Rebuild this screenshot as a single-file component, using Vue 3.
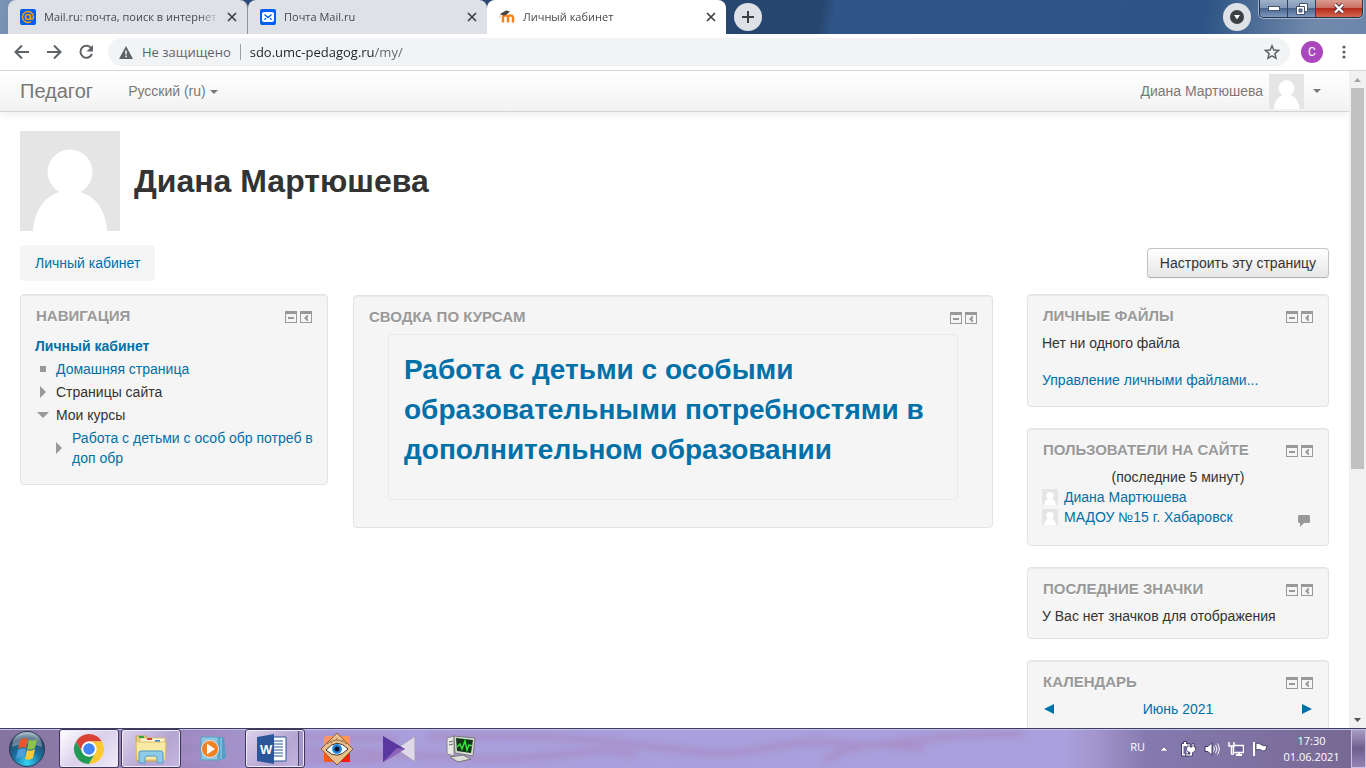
<script setup>
import { ref } from 'vue'

const address = ref('sdo.umc-pedagog.ru/my/')

const tabs = [
  { id: 'mail', title: 'Mail.ru: почта, поиск в интернет' },
  { id: 'post', title: 'Почта Mail.ru' },
  { id: 'moodle', title: 'Личный кабинет' }
]
const activeTab = ref('moodle')

const onlineUsers = [
  { name: 'Диана Мартюшева', message: false },
  { name: 'МАДОУ №15 г. Хабаровск', message: true }
]

const sideBlocks = [
  { id: 'files', title: 'Личные файлы' },
  { id: 'online', title: 'Пользователи на сайте' },
  { id: 'badges', title: 'Последние значки' },
  { id: 'calendar', title: 'Календарь' }
]

const tasks = [
  { id: 'chrome', label: 'Google Chrome', state: 'active' },
  { id: 'explorer', label: 'Проводник', state: 'open' },
  { id: 'player', label: 'Проигрыватель', state: '' },
  { id: 'word', label: 'Word', state: 'open stacked' },
  { id: 'viewer', label: 'Просмотр изображений', state: '' },
  { id: 'kmp', label: 'KMPlayer', state: '' },
  { id: 'monitor', label: 'Монитор', state: '' }
]
</script>

<template>
  <div class="screen">
    <header class="tabstrip">
      <div class="tabs">
        <div
          v-for="tab in tabs"
          :key="tab.id"
          class="tab"
          :class="{ active: tab.id === activeTab }"
          @click="activeTab = tab.id"
        >
          <svg v-if="tab.id === 'mail'" class="favicon" viewBox="0 0 16 16">
            <rect width="16" height="16" rx="2" fill="#005ff9" />
            <circle cx="8" cy="8" r="2.5" fill="none" stroke="#ff9e00" stroke-width="1.5" />
            <path d="M10.5 5.5v3.2c0 2.4 3 2 3-.7A5.5 5.5 0 1 0 11 12.6" fill="none" stroke="#ff9e00" stroke-width="1.4" />
          </svg>
          <svg v-else-if="tab.id === 'post'" class="favicon" viewBox="0 0 16 16">
            <rect width="16" height="16" rx="2" fill="#005ff9" />
            <rect x="2" y="3" width="12" height="10" rx="2" fill="#fff" />
            <path d="M4.5 5.5L8 8.5l3.500-3M4.500 10.800L6 9.300M11.500 10.800L10 9.300" fill="none" stroke="#005ff9" stroke-width="1.4" />
          </svg>
          <svg v-else class="favicon" viewBox="0 0 16 16">
            <path d="M4 13.500V9c0-3.500 5-3.500 5 0v4.500M9 13.500V9c0-3.500 5-3.500 5 0v4.500" fill="none" stroke="#f98012" stroke-width="2.400" />
            <path d="M1 5l6-3.500 4 1-4 3.500-3 .5z" fill="#444" />
            <path d="M1.500 5L.8 9" stroke="#e9b98a" fill="none" />
          </svg>
          <span class="tab-title">{{ tab.title }}</span>
          <button class="tab-close" aria-label="Закрыть вкладку">
            <svg width="10" height="10" viewBox="0 0 10 10">
              <path d="M1 1l8 8M9 1L1 9" stroke="#3c4043" stroke-width="1.700" />
            </svg>
          </button>
        </div>
      </div>
      <button class="round-btn" aria-label="Новая вкладка">
        <svg width="12" height="12" viewBox="0 0 12 12">
          <path d="M6 0v12M0 6h12" stroke="#3c4043" stroke-width="2" />
        </svg>
      </button>
      <span class="glass"></span>
      <button class="round-btn search-tabs" aria-label="Поиск вкладок">
        <svg width="14" height="14" viewBox="0 0 14 14">
          <circle cx="7" cy="7" r="7" fill="#3c4043" />
          <path d="M4 5h6L7 9.500z" fill="#fff" />
        </svg>
      </button>
      <div class="win-controls">
        <button aria-label="Свернуть">
          <svg width="12" height="5" viewBox="0 0 12 5"><rect x=".5" y=".5" width="11" height="4" fill="#fff" stroke="#45536b" /></svg>
        </button>
        <button aria-label="Развернуть">
          <svg width="12" height="12" viewBox="0 0 12 12">
            <path d="M3.500.5h8v8h-8z" fill="#fff" stroke="#45536b" />
            <path d="M.5 3.500h8v8h-8z" fill="#fff" stroke="#45536b" />
            <path d="M3 6h3v3H3z" fill="#6e84a5" stroke="#45536b" />
          </svg>
        </button>
        <button class="win-close" aria-label="Закрыть">
          <svg width="12" height="11" viewBox="0 0 12 11">
            <path d="M2 1.500l8 8M10 1.500l-8 8" stroke="#54323a" stroke-width="4" />
            <path d="M2 1.500l8 8M10 1.500l-8 8" stroke="#fff" stroke-width="2.400" />
          </svg>
        </button>
      </div>
    </header>

    <div class="toolbar">
      <button class="tool" aria-label="Назад">
        <svg width="16" height="16" viewBox="0 0 16 16"><path d="M15 8H2M8 1.500L1.500 8 8 14.500" fill="none" stroke="#5f6368" stroke-width="2" /></svg>
      </button>
      <button class="tool" aria-label="Вперёд">
        <svg width="16" height="16" viewBox="0 0 16 16"><path d="M1 8h13M8 1.500L14.500 8 8 14.500" fill="none" stroke="#5f6368" stroke-width="2" /></svg>
      </button>
      <button class="tool" aria-label="Обновить">
        <svg width="16" height="16" viewBox="0 0 16 16">
          <path d="M13.500 4.500A6 6 0 1 0 14 10" fill="none" stroke="#5f6368" stroke-width="2" />
          <path d="M15 1v6.500H8.500z" fill="#5f6368" />
        </svg>
      </button>
      <div class="omnibox">
        <svg width="14" height="13" viewBox="0 0 14 13">
          <path d="M7 0l7 13H0z" fill="#5f6368" />
          <path d="M7 4.500v4M7 9.500v1.700" stroke="#f1f3f4" stroke-width="1.600" />
        </svg>
        <label class="insecure" for="address">Не защищено</label>
        <input id="address" v-model="address" class="address" type="text" />
        <button class="star" aria-label="Добавить в закладки">
          <svg width="16" height="16" viewBox="0 0 16 16">
            <path d="M8 1.800l1.800 4.300 4.700.4-3.600 3.100 1.100 4.600L8 11.800l-4 2.400 1.100-4.600L1.500 6.500l4.700-.4z" fill="none" stroke="#5f6368" stroke-width="1.500" />
          </svg>
        </button>
      </div>
      <button class="profile">C</button>
      <button class="kebab" aria-label="Меню">
        <svg width="4" height="14" viewBox="0 0 4 14" fill="#5f6368">
          <circle cx="2" cy="2" r="1.600" /><circle cx="2" cy="7" r="1.600" /><circle cx="2" cy="12" r="1.600" />
        </svg>
      </button>
    </div>

    <div class="viewport">
      <div class="page">
        <nav class="navbar">
          <a class="brand" href="#">Педагог</a>
          <a class="lang" href="#">Русский (ru) <i class="caret"></i></a>
          <a class="user-menu" href="#">
            <span>Диана Мартюшева</span>
            <svg width="35" height="35" viewBox="0 0 100 100">
              <rect width="100" height="100" fill="#e5e5e5" />
              <circle cx="50" cy="41" r="23" fill="#fff" />
              <path d="M13 100c2-22 14-36 27-40h20c14 4 26 18 27 40z" fill="#fff" />
            </svg>
            <i class="caret"></i>
          </a>
        </nav>

        <div class="content">
          <div class="page-header">
            <svg width="100" height="100" viewBox="0 0 100 100">
              <rect width="100" height="100" fill="#e5e5e5" />
              <circle cx="50" cy="41" r="22.500" fill="#fff" />
              <path d="M13 100c1-21 13-36 27-39h20c14 3 26 18 27 39z" fill="#fff" />
            </svg>
            <h1>Диана Мартюшева</h1>
          </div>

          <div class="page-bar">
            <div class="breadcrumb"><a href="#">Личный кабинет</a></div>
            <button class="customise">Настроить эту страницу</button>
          </div>

          <div class="columns">
            <section class="block nav-block">
              <div class="block-head">
                <h2>Навигация</h2>
                <span class="block-actions">
                  <button aria-label="Скрыть блок"><svg width="12" height="12" viewBox="0 0 12 12"><path d="M0 0h12v12H0zM1 3v8h10V3zM3 6h6v2H3z" fill="#999" fill-rule="evenodd" /></svg></button>
                  <button aria-label="Закрепить блок"><svg width="12" height="12" viewBox="0 0 12 12"><path d="M0 0h12v12H0zM1 3v8h10V3zM7 4h1v2L7 7l1 1v2H7L4 7z" fill="#999" fill-rule="evenodd" /></svg></button>
                </span>
              </div>
              <ul class="tree">
                <li><a class="current" href="#">Личный кабинет</a></li>
                <li class="node"><i class="mark square"></i><a href="#">Домашняя страница</a></li>
                <li class="node"><i class="mark right"></i><span>Страницы сайта</span></li>
                <li class="node"><i class="mark down"></i><span>Мои курсы</span></li>
                <li class="node child"><i class="mark right"></i><a href="#">Работа с детьми с особ обр потреб в доп обр</a></li>
              </ul>
            </section>

            <section class="block main-block">
              <div class="block-head">
                <h2>Сводка по курсам</h2>
                <span class="block-actions">
                  <button aria-label="Скрыть блок"><svg width="12" height="12" viewBox="0 0 12 12"><path d="M0 0h12v12H0zM1 3v8h10V3zM3 6h6v2H3z" fill="#999" fill-rule="evenodd" /></svg></button>
                  <button aria-label="Закрепить блок"><svg width="12" height="12" viewBox="0 0 12 12"><path d="M0 0h12v12H0zM1 3v8h10V3zM7 4h1v2L7 7l1 1v2H7L4 7z" fill="#999" fill-rule="evenodd" /></svg></button>
                </span>
              </div>
              <div class="course">
                <h3><a href="#">Работа с детьми с особыми образовательными потребностями в дополнительном образовании</a></h3>
              </div>
            </section>

            <aside>
              <section v-for="block in sideBlocks" :key="block.id" class="block" :class="block.id">
                <div class="block-head">
                  <h2>{{ block.title }}</h2>
                  <span class="block-actions">
                    <button aria-label="Скрыть блок"><svg width="12" height="12" viewBox="0 0 12 12"><path d="M0 0h12v12H0zM1 3v8h10V3zM3 6h6v2H3z" fill="#999" fill-rule="evenodd" /></svg></button>
                    <button aria-label="Закрепить блок"><svg width="12" height="12" viewBox="0 0 12 12"><path d="M0 0h12v12H0zM1 3v8h10V3zM7 4h1v2L7 7l1 1v2H7L4 7z" fill="#999" fill-rule="evenodd" /></svg></button>
                  </span>
                </div>
                <div v-if="block.id === 'files'" class="files-body">
                  <p>Нет ни одного файла</p>
                  <a href="#">Управление личными файлами...</a>
                </div>
                <div v-else-if="block.id === 'online'" class="online-body">
                  <p class="centered">(последние 5 минут)</p>
                  <div v-for="user in onlineUsers" :key="user.name" class="online-user">
                    <svg width="16" height="16" viewBox="0 0 100 100">
                      <rect width="100" height="100" fill="#e5e5e5" />
                      <circle cx="50" cy="41" r="23" fill="#fff" />
                      <path d="M13 100c2-22 14-36 27-40h20c14 4 26 18 27 40z" fill="#fff" />
                    </svg>
                    <a href="#">{{ user.name }}</a>
                    <a v-if="user.message" class="message" href="#" aria-label="Сообщение">
                      <svg width="12" height="12" viewBox="0 0 12 12"><path d="M1 0h10l1 1v6l-1 1H6l-4 4V8H1L0 7V1z" fill="#999" /></svg>
                    </a>
                  </div>
                </div>
                <p v-else-if="block.id === 'badges'">У Вас нет значков для отображения</p>
                <div v-else class="month">
                  <a href="#" aria-label="Предыдущий месяц"><svg width="10" height="10" viewBox="0 0 10 10"><path d="M10 0v10L0 5z" fill="#0070a8" /></svg></a>
                  <a href="#">Июнь 2021</a>
                  <a href="#" aria-label="Следующий месяц"><svg width="10" height="10" viewBox="0 0 10 10"><path d="M0 0v10l10-5z" fill="#0070a8" /></svg></a>
                </div>
              </section>
            </aside>
          </div>
        </div>
      </div>
      <div class="scrollbar">
        <button aria-label="Вверх"><svg width="7" height="4" viewBox="0 0 7 4"><path d="M0 4l3.500-4L7 4z" fill="#a3a3a3" /></svg></button>
        <div class="thumb"></div>
        <button class="scroll-down" aria-label="Вниз"><svg width="7" height="4" viewBox="0 0 7 4"><path d="M0 0h7L3.500 4z" fill="#505050" /></svg></button>
      </div>
    </div>

    <footer class="taskbar">
      <svg class="wood" viewBox="0 0 1100 39" preserveAspectRatio="none" fill="none" stroke="#a88fc8" stroke-width="6">
        <path d="M430 9c80-4 150-2 230 9s80 6 130-2 60 4 100-1 90-12 140-10" />
        <path d="M300 22c80-2 170 12 240 6s60-10 100-2" />
        <path d="M830 32c30-20 60-18 100-12" />
        <path d="M120 8c90 8 180-4 280 2M130 32c60-10 160 4 260-2" />
      </svg>
      <button class="start" aria-label="Пуск">
        <svg width="38" height="38" viewBox="0 0 38 38">
          <defs>
            <radialGradient id="orb" cx=".5" cy=".9" r=".9">
              <stop offset="0" stop-color="#35d6f5" />
              <stop offset=".45" stop-color="#19709f" />
              <stop offset=".8" stop-color="#244867" />
              <stop offset="1" stop-color="#9db6c6" />
            </radialGradient>
          </defs>
          <circle cx="19" cy="19" r="17.500" fill="url(#orb)" stroke="#26384f" />
          <path d="M4 17A15 15 0 0 1 34 17Q19 10 4 17z" fill="#fff" opacity=".3" />
          <path d="M12 10q4-3 8-1l-2 9q-4-2-8 1z" fill="#e8582a" />
          <path d="M21 10q4 2 8-1l-2 9q-4 3-8 1z" fill="#8cc443" />
          <path d="M10 20q4-3 8-1l-2 9q-4-2-8 1z" fill="#4d9fdc" />
          <path d="M19 20q4 2 8-1l-2 9q-4 3-8 1z" fill="#fcca38" />
        </svg>
      </button>
      <button v-for="task in tasks" :key="task.id" class="task" :class="task.state" :aria-label="task.label">
        <svg v-if="task.id === 'chrome'" width="32" height="32" viewBox="0 0 32 32">
          <circle cx="16" cy="16" r="15" fill="#fff" />
          <path d="M3 8.500A15 15 0 0 1 29 8.500H16A7.500 7.500 0 0 0 9.500 19.700z" fill="#d94235" />
          <path d="M3 8.500l6.500 11.200A7.500 7.500 0 0 0 22.500 19.700L16 31A15 15 0 0 1 3 8.500z" fill="#229a55" />
          <path d="M16 8.500h13A15 15 0 0 1 16 31l6.500-11.300A7.500 7.500 0 0 0 16 8.500z" fill="#fbc831" />
          <circle cx="16" cy="16" r="7.500" fill="#fff" />
          <circle cx="16" cy="16" r="5.800" fill="#4285f4" />
        </svg>
        <svg v-else-if="task.id === 'explorer'" width="34" height="32" viewBox="0 0 34 32">
          <path d="M2 3h10l2 3h14v22H3z" fill="#e9cf7d" stroke="#c7a24a" />
          <path d="M6 5h25v20H6z" fill="#fff6cf" stroke="#d8bd70" />
          <path d="M5 3h5v2H5z" fill="#2ea34a" /><path d="M13 5h5v2h-5z" fill="#d9402f" /><path d="M21 7h5v2h-5z" fill="#3b8ad8" />
          <path d="M2 9h30l-1 18H3z" fill="#f8e9a5" stroke="#dcc06d" />
          <path d="M5 30V20q0-2 2-2h20q2 0 2 2v10h-6v-5q0-2-2-2h-8q-2 0-2 2v5z" fill="#8ecbe8" stroke="#5199c4" />
        </svg>
        <svg v-else-if="task.id === 'player'" width="30" height="30" viewBox="0 0 30 30">
          <path d="M17 3h9l2 21-9 3z" fill="#4f9fc9" /><path d="M20 4v22M23 4v21" stroke="#a8d9ec" />
          <rect x="3" y="3" width="17" height="23" fill="#8dc7e2" stroke="#5a9fbf" />
          <circle cx="12" cy="15" r="8.500" fill="#f28021" stroke="#e6e3ea" />
          <path d="M9 9.500v11l8-5.500z" fill="#fff" />
        </svg>
        <svg v-else-if="task.id === 'word'" width="32" height="32" viewBox="0 0 32 32">
          <path d="M17 4h13v24H17z" fill="#fff" stroke="#2b579a" />
          <path d="M18 8h9M18 11h9M18 14h9M18 17h9M18 20h9M18 23h9" stroke="#2b579a" />
          <path d="M1 4l17-3v30L1 28z" fill="#2b579a" />
          <text x="4" y="21" class="word-letter">W</text>
        </svg>
        <svg v-else-if="task.id === 'viewer'" width="34" height="34" viewBox="0 0 34 34">
          <rect x="4" y="4" width="26" height="26" rx="2" fill="#ff9463" />
          <path d="M17 17h13v13H17z" fill="#f91b12" /><path d="M4 17h13v13H4z" fill="#fa5a1c" />
          <path d="M17 1l16 16-16 16L1 17z" fill="#e8be8c" stroke="#8b5a38" />
          <path d="M6 18q11-13 22-1-11 12-22 1z" fill="#fff" stroke="#3d2e2a" />
          <circle cx="17" cy="17" r="5" fill="#2389de" /><circle cx="17" cy="17" r="2.500" fill="#07122c" />
          <path d="M7 12q10-8 20 0M10 9l2 2M17 6v3M23 8l-1 2" fill="none" stroke="#9c7048" />
        </svg>
        <svg v-else-if="task.id === 'kmp'" width="34" height="30" viewBox="0 0 34 30">
          <path d="M33 2v26L14 15z" fill="#ded9e8" stroke="#a59cb8" />
          <path d="M1 2l22 13L1 28z" fill="#5a36a0" /><path d="M1 28l22-13-8-1z" fill="#8d65ba" />
        </svg>
        <svg v-else width="32" height="30" viewBox="0 0 32 30">
          <path d="M2 4l7-2v20l-7-2z" fill="#e8e8e4" stroke="#85858d" /><path d="M4 8l4-1M4 11l4-1" stroke="#666" />
          <path d="M9 2l21 2-2 18-18-3z" fill="#d8dbd4" stroke="#777" />
          <path d="M11 4l17 2-2 13-14-2z" fill="#123719" />
          <path d="M12 13l3-3 2 5 3-8 2 9 2-5 3 1" fill="none" stroke="#35e535" stroke-width="1.500" />
          <path d="M5 23l13-2 8 4-13 3z" fill="#ddd" stroke="#777" />
        </svg>
      </button>

      <div class="tray">
        <span class="input-lang">RU</span>
        <button aria-label="Скрытые значки"><svg width="8" height="5" viewBox="0 0 8 5"><path d="M0 5l4-4 4 4z" fill="#fff" stroke="#4e4674" stroke-width=".5" /></svg></button>
        <button aria-label="Питание">
          <svg width="16" height="16" viewBox="0 0 16 16">
            <path d="M1.500 2.500h2v-2h3v2h2v12.500h-7z" fill="#fff" stroke="#3c3760" /><path d="M3.500 5h3v8h-3z" fill="#6e659a" />
            <path d="M6.500 6H8V2.500h2V6h2V2.500h2V6h1.500v2.500q0 2.500-3 3V15H5.500v-2H10v-1.500q-3.500-.5-3.500-3z" fill="#fff" stroke="#3c3760" stroke-width=".8" />
          </svg>
        </button>
        <button aria-label="Громкость">
          <svg width="16" height="16" viewBox="0 0 16 16">
            <path d="M1 5.500h3L8 1.500v13L4 10.500H1z" fill="#fff" stroke="#3c3760" />
            <path d="M9.500 5.500q2 2.500 0 5M11.500 4q3 4 0 8M13.500 2.500q3.500 5.500 0 11" fill="none" stroke="#fff" />
          </svg>
        </button>
        <button aria-label="Сеть">
          <svg width="16" height="16" viewBox="0 0 16 16">
            <path d="M5.500 4.500h10v7h-10z" fill="#6c6398" stroke="#fff" stroke-width="1.500" />
            <path d="M8 14h6M11 12v2" stroke="#fff" stroke-width="2" />
            <path d="M1 1v4h5V1M3.500 5v8H6" fill="none" stroke="#fff" stroke-width="1.500" />
          </svg>
        </button>
        <button aria-label="Центр поддержки">
          <svg width="16" height="16" viewBox="0 0 16 16">
            <path d="M2 1v14" stroke="#fff" stroke-width="2" />
            <path d="M4 2.500q3-1 5 1t6 1l-1.500 5q-3 1-4.500-.5t-5 0z" fill="#fff" stroke="#3c3760" stroke-width=".8" />
          </svg>
        </button>
        <div class="clock">
          <time>17:30</time>
          <time>01.06.2021</time>
        </div>
        <button class="show-desktop" aria-label="Свернуть все окна"></button>
      </div>
    </footer>
  </div>
</template>

<style>
body {
  margin: 0;
  overflow: hidden;
}
</style>

<style scoped>
* {
  box-sizing: border-box;
}

.screen {
  display: flex;
  flex-direction: column;
  height: 100vh;
  font: 14px/20px 'Liberation Sans', Arial, sans-serif;
  color: #333;
}

button {
  display: flex;
  align-items: center;
  justify-content: center;
  padding: 0;
  border: 0;
  background: none;
  font: inherit;
  color: inherit;
}

a {
  color: #0070a8;
  text-decoration: none;
}

svg {
  flex: none;
  display: block;
}

p,
h1,
h2,
h3,
ul {
  margin: 0;
}

/* browser window */
.tabstrip {
  display: flex;
  flex: none;
  height: 34px;
  padding-left: 8px;
  background: linear-gradient(100deg, #7d95b7 0, #2a4b78 10%, #26466f 60%, #2f5687 61%, #2d5485 88%, #7189ab 96%, #6c86aa);
}

.tabs {
  display: flex;
  flex: 0 1 718px;
  min-width: 0;
}

.tab {
  display: flex;
  flex: 1;
  align-items: center;
  min-width: 0;
  padding: 0 7px 0 12px;
  border-radius: 8px 8px 0 0;
  background: #dee1e6;
  font: 11px/16px 'Open Sans', sans-serif;
  color: #45494d;
}

.tab:first-child {
  border-right: 1px solid #8f949b;
}

.tab.active {
  background: #fff;
}

.favicon {
  width: 16px;
  height: 16px;
  margin-right: 8px;
}

.tab-title {
  flex: 1;
  overflow: hidden;
  white-space: nowrap;
  mask-image: linear-gradient(to right, #000 88%, transparent);
}

.tab-close {
  flex: none;
  width: 16px;
  height: 16px;
  margin-left: 4px;
}

.round-btn {
  flex: none;
  width: 28px;
  height: 28px;
  margin: 3px 0 0 8px;
  border-radius: 50%;
  background: #dee1e6;
}

.glass {
  flex: 1;
}

.search-tabs {
  margin: 3px 8px 0 0;
}

.win-controls {
  display: flex;
  flex: none;
  height: 18px;
  margin-right: 3px;
  border: 1px solid #24344d;
  border-top: 0;
  border-radius: 0 0 5px 5px;
  box-shadow: 0 0 0 1px #a3b4cc;
  overflow: hidden;
}

.win-controls button {
  width: 28px;
  border-right: 1px solid #30415c;
  background: linear-gradient(#a0b2ca, #8299b9 45%, #4a658e 50%, #7f99bd);
}

.win-controls .win-close {
  width: 46px;
  border-right: 0;
  background: linear-gradient(#d99b8e, #cd7061 45%, #b62a1c 50%, #d1694d);
}

.toolbar {
  display: flex;
  flex: none;
  align-items: center;
  height: 37px;
  padding: 0 14px;
  border-bottom: 1px solid #d4d6d9;
  background: #fff;
}

.tool {
  width: 16px;
  height: 16px;
  margin-right: 16px;
}

.omnibox {
  display: flex;
  flex: 1;
  align-items: center;
  height: 28px;
  margin-left: -2px;
  padding: 0 10px 0 11px;
  border-radius: 14px;
  background: #f1f3f4;
  font: 13px/20px 'Open Sans', sans-serif;
}

.insecure {
  margin-left: 9px;
  padding-right: 9px;
  border-right: 1px solid #9aa0a6;
  line-height: 16px;
  color: #5f6368;
}

.address {
  flex: 1;
  min-width: 0;
  padding: 0 0 0 9px;
  border: 0;
  outline: 0;
  background: linear-gradient(to right, #202124 134px, #5f6368 134px);
  background-clip: text;
  font: inherit;
  color: transparent;
}

.profile {
  width: 22px;
  height: 22px;
  margin-left: 11px;
  border-radius: 50%;
  background: #ab47bc;
  font: 12px/22px Roboto, sans-serif;
  color: #fff;
}

.kebab {
  width: 16px;
  height: 16px;
  margin-left: 13px;
}

/* page */
.viewport {
  display: flex;
  flex: 1;
  min-height: 0;
  background: #fff;
}

.page {
  flex: 1;
  min-width: 0;
  overflow: hidden;
}

.navbar {
  display: flex;
  align-items: center;
  height: 41px;
  padding: 0 28px 0 20px;
  border-bottom: 1px solid #d4d4d4;
  background: linear-gradient(#fff, #f2f2f2);
  box-shadow: 0 1px 10px rgba(0, 0, 0, 0.1);
}

.navbar a {
  color: #777;
  text-shadow: 0 1px 0 #fff;
}

.navbar .brand {
  font-size: 20px;
}

.lang {
  margin-left: 35px;
}

.user-menu {
  display: flex;
  align-items: center;
  gap: 6px;
  margin-left: auto;
}

.caret {
  display: inline-block;
  border: 4px solid transparent;
  border-top-color: #777;
  border-bottom: 0;
  vertical-align: middle;
}

.user-menu .caret {
  margin-left: 3px;
}

.content {
  padding: 19px 20px 0;
}

.page-header {
  display: flex;
  align-items: center;
  gap: 14px;
}

h1 {
  font-size: 32px;
  line-height: 40px;
}

.page-bar {
  display: flex;
  align-items: center;
  justify-content: space-between;
  margin: 14px 0 13px;
}

.breadcrumb {
  padding: 8px 15px;
  border-radius: 4px;
  background: #f5f5f5;
}

.customise {
  height: 30px;
  padding: 0 12px;
  border: 1px solid #c5c5c5;
  border-bottom-color: #b3b3b3;
  border-radius: 4px;
  background: linear-gradient(#fff, #e6e6e6);
  box-shadow: 0 1px 2px rgba(0, 0, 0, 0.05);
}

.columns {
  display: grid;
  grid-template-columns: 308fr 640fr 311fr;
  column-gap: 25px;
  align-items: start;
}

.block {
  padding: 11px 14px 16px;
  border: 1px solid #e3e3e3;
  border-radius: 4px;
  background: #f5f5f5;
  box-shadow: inset 0 1px 1px rgba(0, 0, 0, 0.05);
}

.block-head {
  display: flex;
  align-items: center;
  justify-content: space-between;
  padding: 0 1px;
}

h2 {
  font-size: 15px;
  line-height: 20px;
  text-transform: uppercase;
  text-shadow: 0 1px 0 #fff;
  color: #999;
}

.block-actions {
  display: flex;
  gap: 3px;
  padding-top: 2px;
}

.tree {
  margin-top: 10px;
  padding: 0;
  list-style: none;
}

.tree li + li {
  margin-top: 3px;
}

.current {
  font-weight: bold;
}

.node {
  display: flex;
  align-items: center;
}

.mark {
  flex: none;
  width: 12px;
  height: 12px;
  margin: 0 7px 0 2px;
  background: #999;
}

.square {
  clip-path: inset(3px);
}

.right {
  clip-path: polygon(3px 0, 9px 6px, 3px 12px);
}

.down {
  clip-path: polygon(0 3px, 12px 3px, 6px 9px);
}

.child {
  padding-left: 16px;
}

.main-block {
  margin-top: 1px;
  padding-bottom: 27px;
}

.course {
  margin: 7px 20px 0;
  padding: 15px 15px 29px;
  border: 1px dotted #ddd;
  border-radius: 4px;
}

h3 {
  font-size: 28px;
  line-height: 40px;
}

aside {
  display: flex;
  flex-direction: column;
  gap: 21px;
  margin-left: 9px;
}

aside p,
.month {
  margin-top: 7px;
}

.badges {
  padding-bottom: 12px;
}

.files-body a {
  display: block;
  margin-top: 17px;
}

.centered {
  text-align: center;
}

.online-body {
  padding-bottom: 2px;
}

.online-user {
  display: flex;
  align-items: center;
  gap: 6px;
}

.message {
  margin-left: auto;
  padding: 8px 4px 0 0;
}

.month {
  display: flex;
  align-items: center;
  justify-content: space-between;
  min-height: 20px;
  padding: 0 2px;
}

.calendar {
  min-height: 240px;
}

.scrollbar {
  display: flex;
  flex: none;
  flex-direction: column;
  align-items: center;
  width: 17px;
  background: #f1f1f1;
}

.scrollbar button {
  width: 17px;
  height: 17px;
}

.thumb {
  width: 13px;
  height: 58%;
  background: #c1c1c1;
}

.scroll-down {
  margin-top: auto;
}

/* windows taskbar */
.taskbar {
  position: relative;
  display: flex;
  flex: none;
  height: 40px;
  border-top: 1px solid #3e3c60;
  background: linear-gradient(90deg, #85739f, #9a84b8 12%, #a99fdc 22%, #a9a0dd 78%, #a496cf 80%, #857aaf 84%, #766892);
  box-shadow: inset 0 1px 0 #c3c4e6;
  overflow: hidden;
}

.wood {
  position: absolute;
  inset: 0;
  width: 80%;
  height: 100%;
  filter: blur(3px);
}

.start {
  position: relative;
  flex: none;
  width: 58px;
  padding-right: 4px;
}

.task {
  position: relative;
  flex: none;
  width: 60px;
  margin: 0 1px;
  border: 1px solid transparent;
  border-radius: 3px;
}

.task.open,
.task.active {
  border-color: #3c3658;
  background: linear-gradient(135deg, #dcd3ec, #b4a4d2 60%, #c6b9e2);
  box-shadow: inset 0 0 0 1px #eee8f8;
}

.task.active {
  background: linear-gradient(135deg, #fff, #d9d0ea 50%, #efeaf7);
}

.task.stacked {
  padding-right: 6px;
  box-shadow: inset 0 0 0 1px #eee8f8, inset -5px 0 0 #a398c8, inset -6px 0 0 #4b4468;
}

.word-letter {
  font: bold 13px 'Liberation Sans', sans-serif;
  fill: #fff;
}

.tray {
  position: relative;
  display: flex;
  align-items: center;
  margin-left: auto;
  font: 11px/16px 'Open Sans', sans-serif;
  color: #fff;
}

.tray button {
  width: 24px;
  height: 24px;
}

.input-lang {
  margin: 0 7px 4px 0;
}

.clock {
  display: flex;
  flex-direction: column;
  align-items: center;
  width: 79px;
}

.tray .show-desktop {
  width: 15px;
  height: 39px;
  border: 1px solid #c9bfdf;
  background: linear-gradient(#a89dc4, #6f5f8e 50%, #9384b4);
}
</style>
